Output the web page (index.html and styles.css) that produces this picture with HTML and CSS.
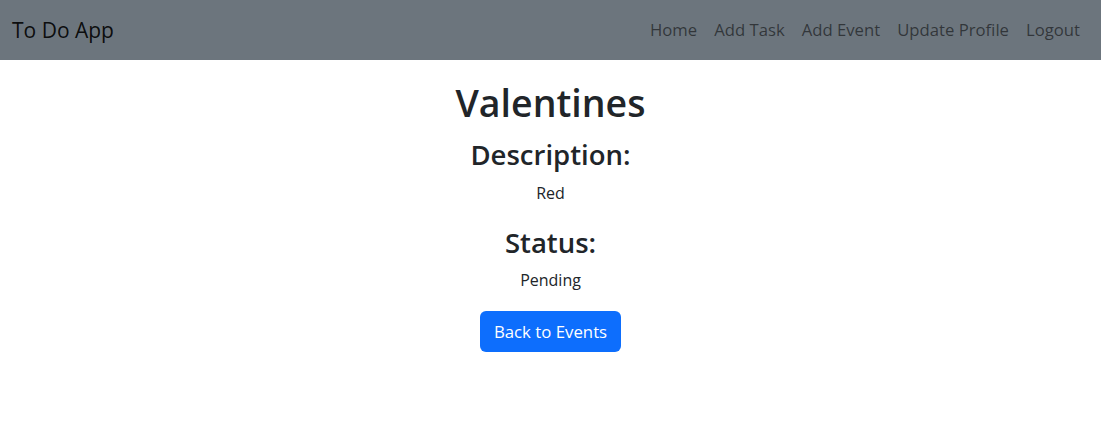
FILE: index.html
```html
<!DOCTYPE html>
<html lang="en">
<head>
<meta charset="utf-8">
<title>To Do App</title>
<link rel="stylesheet" href="styles.css">
</head>
<body>
<nav class="navbar">
  <a class="brand" href="#">To Do App</a>
  <ul class="nav">
    <li><a class="nav-link" href="#">Home</a></li>
    <li><a class="nav-link" href="#">Add Task</a></li>
    <li><a class="nav-link" href="#">Add Event</a></li>
    <li><a class="nav-link" href="#">Update Profile</a></li>
    <li><a class="nav-link" href="#">Logout</a></li>
  </ul>
</nav>
<main class="content">
  <h1 class="title">Valentines</h1>
  <h3 class="label">Description:</h3>
  <p class="value">Red</p>
  <h3 class="label label-gap">Status:</h3>
  <p class="value">Pending</p>
  <a class="btn" href="#">Back to Events</a>
</main>
</body>
</html>
```
FILE: styles.css
```css
* { box-sizing: border-box; }
body {
  margin: 0;
  font-family: "Open Sans", "Noto Sans", sans-serif;
  font-size: 16px;
  line-height: 1.5;
  color: #212529;
  background: #fff;
}
.navbar {
  height: 60px;
  background: #6c757d;
  display: flex;
  align-items: center;
  justify-content: space-between;
  padding: 0 12px;
}
.brand {
  font-size: 21px;
  color: rgba(0,0,0,.9);
  text-decoration: none;
  line-height: 30px;
}
.nav {
  list-style: none;
  margin: 0;
  padding: 0;
  display: flex;
  margin-right: 0.5px;
}
.nav-link {
  display: block;
  padding: 8px 8.5px;
  color: rgba(0,0,0,.55);
  text-decoration: none;
  font-size: 16.7px;
  line-height: 24px;
}
.content {
  text-align: center;
}
.title {
  margin: 19px 0 0;
  font-size: 37.5px;
  font-weight: 600;
  line-height: 48px;
}
.label {
  margin: 11px 0 0;
  font-size: 27.5px;
  font-weight: 600;
  line-height: 33.6px;
}
.label-gap { margin-top: 21px; }
.value {
  margin: 9px 0 0;
  line-height: 24px;
}
.btn {
  display: inline-block;
  margin-top: 19px;
  padding: 8px 14px;
  height: 41px;
  background: #0d6efd;
  color: #fff;
  border-radius: 6px;
  text-decoration: none;
  font-size: 16.8px;
  line-height: 25px;
}
```
